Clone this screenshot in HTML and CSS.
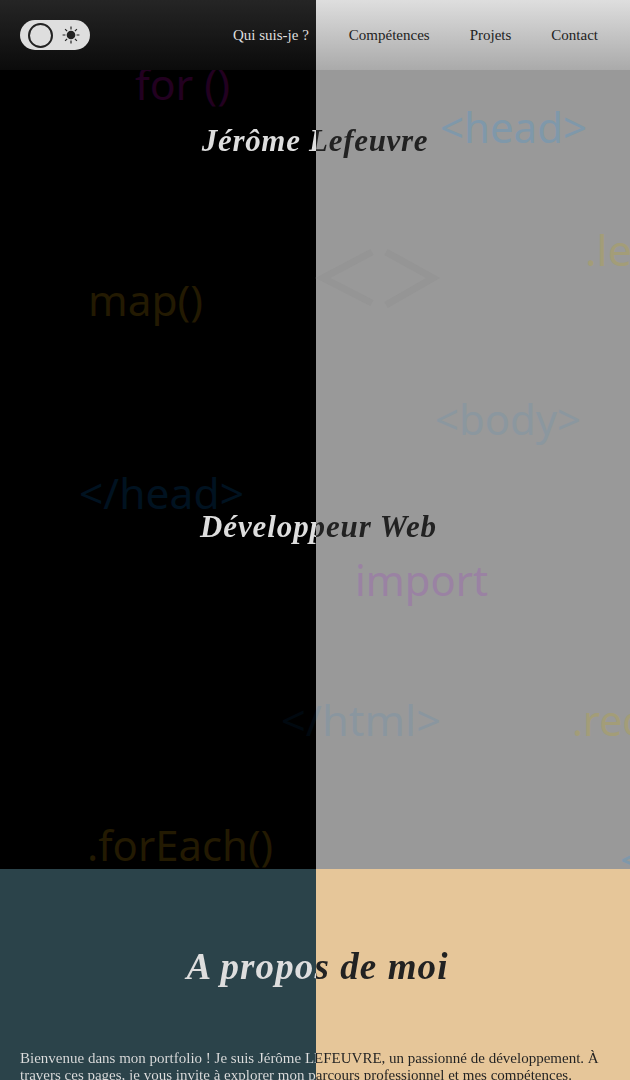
FILE: index.html
```html
<!DOCTYPE html>
<html lang="fr">
<head>
<meta charset="utf-8">
<title>Jérôme Lefeuvre – Développeur Web</title>
<link rel="stylesheet" href="styles.css">
</head>
<body>
<header class="header">
  <div class="switch">
    <span class="switch-knob"></span>
    <svg class="sun" viewBox="0 0 18 18" width="18" height="18">
      <circle cx="9" cy="9" r="4.3" fill="#222"/>
      <path d="M9 .6v2.8M9 14.6v2.8M.6 9h2.8M14.6 9h2.8M3.1 3.1l2 2M12.9 12.9l2 2M3.1 14.9l2-2M12.9 5.1l2-2" stroke="#222" stroke-width="1.2"/>
    </svg>
  </div>
  <nav class="nav">
    <a class="link link-light">Qui suis-je ?</a>
    <a class="link">Compétences</a>
    <a class="link">Projets</a>
    <a class="link">Contact</a>
  </nav>
</header>
<main>
  <section class="hero">
    <svg class="words" viewBox="0 0 630 799" width="630" height="799">
      <defs>
        <linearGradient id="split" gradientUnits="userSpaceOnUse" x1="0" y1="0" x2="632" y2="0">
          <stop offset=".5" stop-color="#00080f"/><stop offset=".5" stop-color="#8a969f"/>
        </linearGradient>
      </defs>
      <g font-size="42">
        <text class="w-plum" x="135" y="30" textLength="95" lengthAdjust="spacingAndGlyphs">for ()</text>
        <text class="w-blue" x="440" y="73" textLength="147" lengthAdjust="spacingAndGlyphs">&lt;head&gt;</text>
        <text class="w-yellow" x="585" y="196" textLength="47" lengthAdjust="spacingAndGlyphs">.le</text>
        <text class="w-brown" x="88" y="246" textLength="115" lengthAdjust="spacingAndGlyphs">map()</text>
        <text class="w-pale" x="435" y="365" textLength="146" lengthAdjust="spacingAndGlyphs">&lt;body&gt;</text>
        <text class="w-navy" x="79" y="439" textLength="165" lengthAdjust="spacingAndGlyphs">&lt;/head&gt;</text>
        <text class="w-violet" x="355" y="526" textLength="133" lengthAdjust="spacingAndGlyphs">import</text>
        <text fill="url(#split)" x="281" y="666" textLength="160" lengthAdjust="spacingAndGlyphs">&lt;/html&gt;</text>
        <text class="w-yellow" x="572" y="666" textLength="70" lengthAdjust="spacingAndGlyphs">.rec</text>
        <text class="w-brown" x="87" y="791" textLength="186" lengthAdjust="spacingAndGlyphs">.forEach()</text>
        <text class="w-blue" x="620" y="805">&lt;</text>
      </g>
      <path d="M372 182L323 208L372 233M386 182L433 208L386 235" fill="none" stroke="#959595" stroke-width="7"/>
    </svg>
    <h1 class="title hero-name">Jérôme Lefeuvre</h1>
    <h2 class="title hero-job">Développeur Web</h2>
  </section>
  <section class="about">
    <h2 class="title about-title">A propos de moi</h2>
    <p class="about-text">Bienvenue dans mon portfolio ! Je suis Jérôme LEFEUVRE, un passionné de développement. À travers ces pages, je vous invite à explorer mon parcours professionnel et mes compétences.</p>
  </section>
</main>
</body>
</html>
```
FILE: styles.css
```css
:root {
  --split: 316px;
  --light: #dedede;
  --dark: #222;
}
* { box-sizing: border-box; }
body {
  margin: 0;
  height: 1080px;
  overflow: hidden;
  font: 15px/17px "Liberation Serif", serif;
}
.header {
  height: 70px;
  padding: 0 32px 0 20px;
  display: flex;
  align-items: center;
  justify-content: space-between;
  background:
    linear-gradient(#252525, #0b0b0b) left / var(--split) 100% no-repeat,
    linear-gradient(#dedede, #aaa);
}
.switch {
  width: 70px;
  height: 30px;
  padding: 0 10px 0 8px;
  display: flex;
  align-items: center;
  justify-content: space-between;
  border-radius: 15px;
  background: var(--light);
}
.switch-knob {
  width: 25px;
  height: 25px;
  border: 2px solid var(--dark);
  border-radius: 50%;
}
.nav { display: flex; gap: 40px; }
.link { color: var(--dark); }
.link-light { color: var(--light); }
.hero {
  position: relative;
  height: 799px;
  padding-top: 51px;
  overflow: hidden;
  background: linear-gradient(90deg, #000 var(--split), #999 var(--split));
}
.words {
  position: absolute;
  inset: 0;
  font-family: "Noto Sans", sans-serif;
}
.w-plum { fill: #220020; }
.w-blue { fill: #7f98aa; }
.w-yellow { fill: #a39d78; }
.w-brown { fill: #231a02; }
.w-pale { fill: #8b979f; }
.w-navy { fill: #001220; }
.w-violet { fill: #9a82a3; }
.title {
  position: relative;
  margin: 0;
  text-align: center;
  font-family: "Liberation Serif", serif;
  font-style: italic;
  font-weight: bold;
  font-size: 31px;
  line-height: 40px;
  letter-spacing: .7px;
  color: transparent;
  background: linear-gradient(90deg, var(--light) var(--split), var(--dark) var(--split));
  -webkit-background-clip: text;
  background-clip: text;
}
.hero-job {
  margin-top: 346px;
  padding-left: 7px;
  letter-spacing: .9px;
}
.about {
  height: 211px;
  padding-top: 78px;
  overflow: hidden;
  background: linear-gradient(90deg, #2b434a var(--split), #e6c699 var(--split));
}
.about-title {
  padding-left: 5px;
  font-size: 37px;
  letter-spacing: 1.1px;
}
.about-text {
  margin: 63px 20px 0;
  color: transparent;
  background: linear-gradient(90deg, var(--light) 296px, var(--dark) 296px);
  -webkit-background-clip: text;
  background-clip: text;
}
```
